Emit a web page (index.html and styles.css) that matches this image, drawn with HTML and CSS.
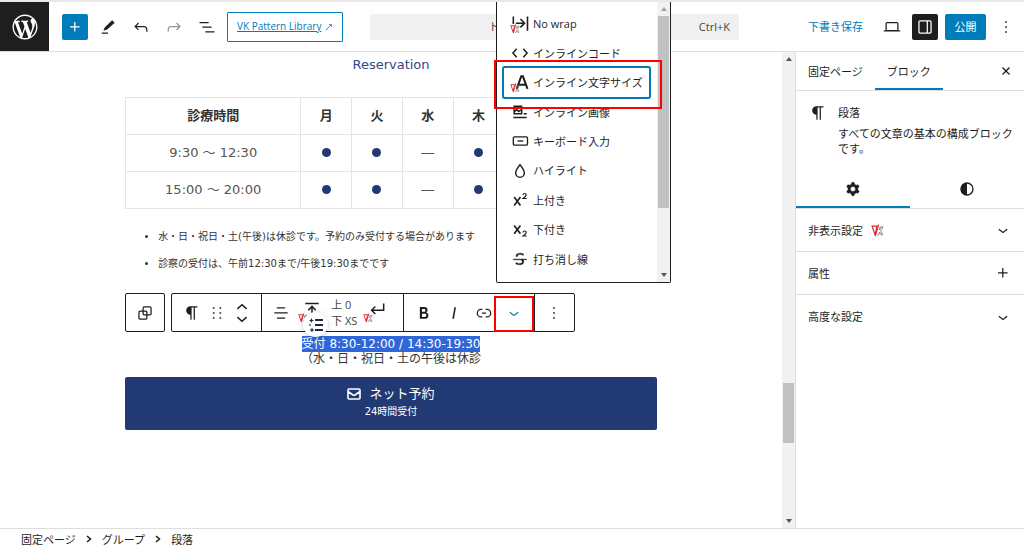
FILE: index.html
```html
<!DOCTYPE html>
<html lang="ja">
<head>
  <meta charset="UTF-8" />
  <meta name="viewport" content="width=device-width, initial-scale=1.0"/>
  <title>固定ページの編集</title>
  <link rel="stylesheet" href="styles.css">
</head>
<body>
  <!-- shared icons -->
  <svg class="sprite" aria-hidden="true">
    <symbol id="i-paragraph" viewBox="0 0 24 24"><path d="M10 14v6h1.500v-14.500h2.500v14.500h1.500v-14.500h3v-1.500h-8.500a5 5 0 0 0 0 10z"/></symbol>
    <symbol id="i-down" viewBox="0 0 24 24"><path d="M17.500 11.600L12 16l-5.500-4.400.9-1.200L12 14l4.500-3.600 1 1.200z"/></symbol>
    <symbol id="i-plus" viewBox="0 0 24 24"><path d="M11 12.500V17.500H12.500V12.500H17.500V11H12.500V6H11V11H6V12.500H11Z"/></symbol>
    <symbol id="i-more" viewBox="0 0 24 24"><path d="M13 19h-2v-2h2v2zm0-6h-2v-2h2v2zm0-6h-2V5h2v2z"/></symbol>
    <symbol id="i-vk" viewBox="0 0 24 24">
      <path d="M2 4h9L7.500 20z" fill="none" stroke="#e0202c" stroke-width="2.200"/>
      <path d="M14 1L8 22" fill="none" stroke="#e0202c" stroke-width="2.200"/>
      <path d="M22 5h-3l-3.500 6L17 5M11.500 20h3l1.500-5 2.500 5h3l-3.500-7.500L22.500 5" fill="none" stroke="#666" stroke-width="1.400"/>
    </symbol>
  </svg>

  <header class="topbar">
    <a href="#" class="wp-logo" aria-label="投稿一覧">
      <svg viewBox="-2 -2 24 24"><path d="M20 10c0-5.510-4.490-10-10-10C4.480 0 0 4.490 0 10c0 5.520 4.480 10 10 10 5.510 0 10-4.480 10-10zM7.780 15.370L4.370 6.220c.55-.02 1.170-.08 1.170-.08.5-.06.44-1.130-.06-1.110 0 0-1.450.11-2.370.11-.18 0-.37 0-.58-.01C4.120 2.690 6.870 1.110 10 1.110c2.330 0 4.450.87 6.050 2.340-.68-.11-1.650.39-1.650 1.580 0 .74.45 1.360.9 2.100.35.61.55 1.360.55 2.460 0 1.490-1.400 5-1.400 5l-3.030-8.370c.54-.02.82-.17.82-.17.5-.05.44-1.250-.06-1.220 0 0-1.440.12-2.380.12-.87 0-2.330-.12-2.330-.12-.5-.03-.56 1.200-.06 1.220l.92.08 1.260 3.410zM17.410 10c.24-.64.74-1.870.43-4.250.7 1.290 1.050 2.710 1.050 4.250 0 3.290-1.730 6.240-4.400 7.780.97-2.590 1.940-5.200 2.920-7.780zM6.100 18.090C3.120 16.650 1.110 13.530 1.110 10c0-1.300.23-2.480.72-3.590C3.250 10.300 4.670 14.200 6.100 18.090zm4.030-6.630l2.580 6.980c-.86.29-1.760.45-2.710.45-.79 0-1.570-.11-2.290-.33.81-2.380 1.620-4.740 2.420-7.100z"/></svg>
    </a>
    <button class="square-btn primary" aria-label="追加"><svg class="icon"><use href="#i-plus"/></svg></button>
    <div class="tools">
      <button aria-label="ツール"><svg class="icon" viewBox="0 0 24 24"><path d="m20 7-3-3-9 8.500-1.500 4 4.500-1.500L20 7Zm-8 11.500H4.500V20H12v-1.500Z"/></svg></button>
      <button aria-label="元に戻す"><svg class="icon" viewBox="0 0 24 24"><path d="M18.300 11.700c-.6-.6-1.400-.9-2.300-.9H6.700l2.900-3.300-1.100-1-4.500 5L8.500 16l1-1-2.700-2.700H16c.5 0 .9.2 1.300.5 1 1 1 3.400 1 4.500v.3h1.500v-.2c0-1.500 0-4.300-1.500-5.700z"/></svg></button>
      <button aria-label="やり直す" class="dim"><svg class="icon" viewBox="0 0 24 24"><path d="M15.600 6.500l-1.100 1 2.900 3.300H8c-.9 0-1.700.3-2.300.9-1.400 1.500-1.400 4.200-1.400 5.600v.2h1.500v-.3c0-1.100 0-3.500 1-4.500.3-.3.7-.5 1.300-.5h9.200L14.500 15l1.100 1.100 4.600-4.600-4.600-5z"/></svg></button>
      <button aria-label="リスト表示"><svg class="icon" viewBox="0 0 24 24"><path d="M3 6h11v1.500H3V6Zm3.500 5.500h11V13h-11v-1.500ZM21 17H10v1.500h11V17Z"/></svg></button>
    </div>
    <a href="#" class="pattern-btn"><span>VK Pattern Library</span>
      <svg viewBox="0 0 10 10"><path d="M1 9L8 2M5 2H8V5" fill="none" stroke="currentColor"/></svg>
    </a>
    <button class="command"><span>ト</span><span>Ctrl+K</span></button>
    <div class="actions">
      <a href="#" class="draft">下書き保存</a>
      <button class="square-btn" aria-label="表示"><svg class="icon" viewBox="0 0 24 24"><path d="M20.500 16h-.7V8c0-1.100-.9-2-2-2H6.200c-1.100 0-2 .9-2 2v8h-.7c-.8 0-1.500.7-1.500 1.500h20c0-.8-.7-1.500-1.500-1.500zM5.700 8c0-.3.2-.5.5-.5h11.600c.3 0 .5.2.5.5v7.600H5.700V8z"/></svg></button>
      <button class="square-btn dark" aria-label="設定"><svg class="icon" viewBox="0 0 24 24"><path d="M18 4H6c-1.100 0-2 .9-2 2v12c0 1.100.9 2 2 2h12c1.100 0 2-.9 2-2V6c0-1.100-.9-2-2-2zm-4 14.500H6c-.3 0-.5-.2-.5-.5V6c0-.3.2-.5.5-.5h8v13zm4.500-.5c0 .3-.2.5-.5.5h-2.500v-13H18c.3 0 .5.2.5.5v12z"/></svg></button>
      <button class="publish primary">公開</button>
      <button class="square-btn" aria-label="オプション"><svg class="icon"><use href="#i-more"/></svg></button>
    </div>
  </header>

  <div class="workspace">
    <main class="canvas">
      <div class="content">
        <p class="subtitle">Reservation</p>
        <table class="hours">
          <thead>
            <tr><th class="time">診療時間</th><th>月</th><th>火</th><th>水</th><th>木</th><th></th><th></th><th></th></tr>
          </thead>
          <tbody>
            <tr><td>9:30 ～ 12:30</td><td><i class="dot"></i></td><td><i class="dot"></i></td><td>―</td><td><i class="dot"></i></td><td></td><td></td><td></td></tr>
            <tr><td>15:00 ～ 20:00</td><td><i class="dot"></i></td><td><i class="dot"></i></td><td>―</td><td><i class="dot"></i></td><td></td><td></td><td></td></tr>
          </tbody>
        </table>
        <ul class="notes">
          <li>水・日・祝日・土(午後)は休診です。予約のみ受付する場合があります</li>
          <li>診察の受付は、午前12:30まで/午後19:30までです</li>
        </ul>

        <div class="toolbar">
          <div class="group parent">
            <button aria-label="親ブロックを選択"><svg class="icon" viewBox="0 0 24 24"><path d="M18 4h-7c-1.100 0-2 .9-2 2v3H6c-1.100 0-2 .9-2 2v7c0 1.100.9 2 2 2h7c1.100 0 2-.9 2-2v-3h3c1.100 0 2-.9 2-2V6c0-1.100-.9-2-2-2zm-4.500 14c0 .3-.2.5-.5.5H6c-.3 0-.5-.2-.5-.5v-7c0-.3.2-.5.5-.5h3V13c0 1.100.9 2 2 2h2.500v3zm0-4.500H11c-.3 0-.5-.2-.5-.5v-2.500H13c.3 0 .5.2.5.5v2.500zm5-.5c0 .3-.2.5-.5.5h-3V11c0-1.100-.9-2-2-2h-2.500V6c0-.3.2-.5.5-.5h7c.3 0 .5.2.5.5v7z"/></svg></button>
          </div>
          <div class="bar">
            <div class="group block-tools">
              <button aria-label="段落"><svg class="icon"><use href="#i-paragraph"/></svg></button>
              <button aria-label="ドラッグ"><svg class="icon" viewBox="0 0 24 24"><path d="M7 7h2V5H7v2zm0 6h2v-2H7v2zm0 6h2v-2H7v2zm8-14v2h2V5h-2zm0 8h2v-2h-2v2zm0 6h2v-2h-2v2z"/></svg></button>
              <button aria-label="移動"><svg class="icon" viewBox="0 0 24 24"><path d="M6.500 7L12 2l5.500 5M6.500 17l5.500 5 5.500-5" fill="none" stroke="currentColor" stroke-width="1.800"/></svg></button>
            </div>
            <div class="group spacing">
              <button aria-label="配置"><svg class="icon" viewBox="0 0 24 24"><path d="M7 5h10v1.500H7zM4 11.200h16v1.500H4zM7 17.500h10V19H7z"/></svg></button>
              <button aria-label="余白" class="vk-btn"><svg class="icon" viewBox="0 0 24 24"><path d="M4 3h16M12 18V7M7.500 11L12 6.500l4.500 4.500" fill="none" stroke="currentColor" stroke-width="1.800"/></svg><svg class="vk"><use href="#i-vk"/></svg></button>
              <div class="margins">上 0<br>下 XS</div>
              <button aria-label="改行" class="vk-btn"><svg class="icon" viewBox="0 0 24 24"><path d="M20 3v8H6M10 6.500L5.500 11l4.500 4.500" fill="none" stroke="currentColor" stroke-width="1.800"/></svg><svg class="vk"><use href="#i-vk"/></svg></button>
              <button class="helper" aria-label="候補"><svg viewBox="0 0 16 16"><path d="M7 3h8M7 8h8M7 13h8" fill="none" stroke="#1d2740" stroke-width="1.800"/><path d="M3.500 1l.7 1.700L6 3.500l-1.800.7L3.500 6l-.8-1.800L1 3.500l1.700-.8zM2 6.700l.4.900.9.400-.9.400L2 9.300l-.4-.9-.9-.4.9-.4zM4 10.500l.7 1.700 1.800.8-1.800.7L4 15.500l-.8-1.800-1.700-.7 1.700-.8z" fill="#1d2740"/></svg></button>
            </div>
            <div class="group formats">
              <button aria-label="太字"><svg class="icon" viewBox="0 0 24 24"><path d="M14.700 11.300c1-.6 1.500-1.600 1.500-3 0-2.300-1.300-3.400-4-3.400H7v14h5.800c1.400 0 2.500-.3 3.300-1 .8-.7 1.200-1.700 1.200-2.900.1-1.900-.8-3.100-2.600-3.700zm-5.100-4h2.300c.6 0 1.100.1 1.400.4.3.3.5.7.5 1.200s-.2 1-.5 1.200c-.3.3-.8.4-1.400.4H9.600V7.300zm4.600 9c-.4.3-1 .4-1.700.4H9.600v-3.900h2.900c.7 0 1.300.2 1.700.5.4.3.6.8.6 1.500s-.2 1.200-.6 1.500z"/></svg></button>
              <button aria-label="斜体"><svg class="icon" viewBox="0 0 24 24"><path d="M12.500 5L10 19h1.900l2.500-14z"/></svg></button>
              <button aria-label="リンク"><svg class="icon" viewBox="0 0 24 24"><path d="M10 17.400H8.400A5.200 5.200 0 1 1 8.400 7H10v1.500H8.400a3.700 3.700 0 0 0 0 7.400H10v1.500ZM14 7h1.600a5.200 5.200 0 0 1 0 10.400H14v-1.500h1.600a3.700 3.700 0 0 0 0-7.400H14V7Zm-4.500 6h5v-1.500h-5V13Z"/></svg></button>
              <button aria-label="さらに表示" class="more-formats"><svg class="icon"><use href="#i-down"/></svg><span class="mark"></span></button>
            </div>
            <div class="group options">
              <button aria-label="オプション"><svg class="icon"><use href="#i-more"/></svg></button>
            </div>
          </div>
        </div>

        <p class="reception"><mark>受付 8:30-12:00 / 14:30-19:30</mark><br>（水・日・祝日・土の午後は休診</p>

        <a href="#" class="reserve">
          <span class="reserve-main">
            <svg viewBox="0 0 14 12"><path d="M2 1h10a1 1 0 0 1 1 1v8a1 1 0 0 1-1 1H2a1 1 0 0 1-1-1V2a1 1 0 0 1 1-1zM1 3.500l5 3.500q1 .6 2 0l5-3.500" fill="none" stroke="currentColor" stroke-width="1.600"/></svg>
            ネット予約
          </span>
          <span class="reserve-sub">24時間受付</span>
        </a>
      </div>
    </main>

    <div class="scrollbar page-scroll">
      <i class="arrow up"></i><i class="track-before"></i><i class="thumb"></i><i class="track-after"></i><i class="arrow down"></i>
    </div>

    <aside class="sidebar">
      <div class="tabs">
        <button>固定ページ</button>
        <button class="active">ブロック</button>
        <button class="close" aria-label="閉じる"><svg class="icon" viewBox="0 0 24 24"><path d="M12 13.100l3.700 3.700 1.100-1.100L13.100 12l3.700-3.700-1.100-1.100L12 10.900 8.300 7.200 7.200 8.300l3.700 3.700-3.700 3.700 1.100 1.100z"/></svg></button>
      </div>
      <div class="card">
        <svg class="icon"><use href="#i-paragraph"/></svg>
        <div>
          <h2>段落</h2>
          <p>すべての文章の基本の構成ブロックです。</p>
        </div>
      </div>
      <div class="subtabs">
        <button class="active" aria-label="設定"><svg class="icon" viewBox="0 0 24 24"><path fill-rule="evenodd" d="M10.300 4.800A1 1 0 0111.300 4h1.300a1 1 0 011 .8l.2 1.500c.8.3 1.500.7 2.100 1.200l1.400-.5a1 1 0 011.200.4l.7 1.200a1 1 0 01-.3 1.200l-1.100 1a6 6 0 010 2.400l1.100.9a1 1 0 01.3 1.300l-.7 1.100a1 1 0 01-1.200.5l-1.400-.6c-.6.6-1.300 1-2.100 1.300l-.2 1.400a1 1 0 01-1 .9h-1.300a1 1 0 01-1-.9l-.3-1.400a6 6 0 01-2.100-1.300l-1.400.6a1 1 0 01-1.200-.5l-.6-1.100a1 1 0 01.2-1.300l1.200-.9a6 6 0 010-2.400l-1.200-1a1 1 0 01-.2-1.200l.6-1.200a1 1 0 011.200-.4l1.400.5a6 6 0 012.100-1.200zM14.900 12a3 3 0 11-6 0 3 3 0 016 0z" stroke="currentColor" stroke-width=".5"/></svg></button>
        <button aria-label="スタイル"><svg class="icon" viewBox="0 0 24 24"><circle cx="12" cy="12" r="7.200" fill="none" stroke="currentColor" stroke-width="1.600"/><path d="M12 4.500a7.500 7.500 0 0 0 0 15z"/></svg></button>
      </div>
      <button class="panel"><span>非表示設定</span><svg class="vk"><use href="#i-vk"/></svg><svg class="icon"><use href="#i-down"/></svg></button>
      <button class="panel"><span>属性</span><svg class="icon"><use href="#i-plus"/></svg></button>
      <button class="panel"><span>高度な設定</span><svg class="icon"><use href="#i-down"/></svg></button>
    </aside>
  </div>

  <footer class="breadcrumb">
    <a href="#">固定ページ</a>
    <svg viewBox="0 0 6 8"><path d="M1 1l3.500 3L1 7" fill="none" stroke="currentColor" stroke-width="1.500"/></svg>
    <a href="#">グループ</a>
    <svg viewBox="0 0 6 8"><path d="M1 1l3.500 3L1 7" fill="none" stroke="currentColor" stroke-width="1.500"/></svg>
    <span>段落</span>
  </footer>

  <!-- format drop-down, opened over the page -->
  <div class="menu">
    <div class="menu-list">
      <button><span class="menu-icon"><svg class="icon" viewBox="0 0 24 24"><path d="M4 3v9M21 3v17M7 11h10M12.500 6l5 5-5 5" fill="none" stroke="currentColor" stroke-width="1.900"/></svg><svg class="vk"><use href="#i-vk"/></svg></span>No wrap</button>
      <button><span class="menu-icon"><svg class="icon" viewBox="0 0 24 24"><path d="M8 7L3.500 12l4.500 5M16 7l4.500 5-4.500 5" fill="none" stroke="currentColor" stroke-width="1.800"/></svg></span>インラインコード</button>
      <button class="selected"><span class="menu-icon"><svg class="icon" viewBox="0 0 24 24"><path d="M8 19L13.500 4h2L21 19M10 14h9" fill="none" stroke="currentColor" stroke-width="2.400"/></svg><svg class="vk"><use href="#i-vk"/></svg></span>インライン文字サイズ</button>
      <button><span class="menu-icon"><svg class="icon" viewBox="0 0 24 24"><path d="M5 5h9v9H5zM4 18.500h16M16.500 14H20M5 12l3-3 2.500 2.500L14 9" fill="none" stroke="currentColor" stroke-width="1.800"/></svg></span>インライン画像</button>
      <button><span class="menu-icon"><svg class="icon" viewBox="0 0 24 24"><rect x="4" y="7" width="17" height="10" rx="1.500" fill="none" stroke="currentColor" stroke-width="1.600"/><path d="M9 11.200h7v1.600H9z"/></svg></span>キーボード入力</button>
      <button><span class="menu-icon"><svg class="icon" viewBox="0 0 24 24"><path d="M12 4.500q-5.200 6.500-5.200 9.800a5.200 5.200 0 0 0 10.400 0q0-3.300-5.200-9.800z" fill="none" stroke="currentColor" stroke-width="1.700"/></svg></span>ハイライト</button>
      <button><span class="menu-icon"><svg class="icon" viewBox="0 0 24 24"><path d="M5 8.500l7.500 10M12.500 8.500L5 18.500" fill="none" stroke="currentColor" stroke-width="2"/><path d="M15.500 6q.3-1.800 2-1.800 1.900 0 1.900 1.700 0 1.300-3.700 4.300H20" fill="none" stroke="currentColor" stroke-width="1.400"/></svg></span>上付き</button>
      <button><span class="menu-icon"><svg class="icon" viewBox="0 0 24 24"><path d="M5 6.500l7.500 10M12.500 6.500L5 16.500" fill="none" stroke="currentColor" stroke-width="2"/><path d="M15.500 15q.3-1.800 2-1.800 1.900 0 1.900 1.700 0 1.300-3.700 4.300H20" fill="none" stroke="currentColor" stroke-width="1.400"/></svg></span>下付き</button>
      <button><span class="menu-icon"><svg class="icon" viewBox="0 0 24 24"><path d="M9.100 9v-.5c0-.6.2-1.100.7-1.400.5-.3 1.200-.5 2-.5.7 0 1.400.1 2.100.3.7.2 1.400.5 2.100.9l.2-1.900c-.6-.3-1.200-.5-1.900-.7-.8-.1-1.600-.2-2.400-.2-1.500 0-2.700.3-3.600 1-.8.7-1.200 1.500-1.200 2.600V9h2zM20 12H4v1h8.300c.3.1.6.2.8.3.5.2.9.5 1.100.8.3.3.4.7.4 1.200 0 .7-.2 1.100-.8 1.500-.5.3-1.200.5-2.100.5-.8 0-1.600-.1-2.400-.3-.8-.2-1.500-.5-2.200-.8L7 18.100c.5.2 1.200.4 2 .6.8.2 1.600.3 2.400.3 1.700 0 3-.3 3.900-1 .9-.7 1.300-1.600 1.300-2.800 0-.9-.2-1.700-.7-2.200H20v-1z" stroke="currentColor" stroke-width=".4"/></svg></span>打ち消し線</button>
    </div>
    <div class="scrollbar menu-scroll">
      <i class="arrow up"></i><i class="thumb"></i><i class="track-after"></i><i class="arrow down"></i>
    </div>
    <span class="mark"></span>
  </div>
</body>
</html>
```

FILE: styles.css
```css
* {
  box-sizing: border-box;
}

body {
  margin: 0;
  height: 100vh;
  overflow: hidden;
  display: flex;
  flex-direction: column;
  position: relative;
  background: #fff;
  color: #1e1e1e;
  font-family: "Open Sans", "Noto Sans CJK JP", sans-serif;
  font-size: 11px;
  line-height: 15px;
  border-top: 2px solid #e8e8e8;
}

button {
  display: flex;
  align-items: center;
  justify-content: center;
  margin: 0;
  padding: 0;
  border: none;
  background: none;
  color: inherit;
  font: inherit;
  cursor: pointer;
}

a {
  color: inherit;
  text-decoration: none;
}

h2,
p {
  margin: 0;
}

svg {
  flex: none;
  fill: currentColor;
}

.sprite {
  display: none;
}

.icon {
  width: 20px;
  height: 20px;
}

.vk {
  width: 10px;
  height: 10px;
}

/* top bar */
.topbar {
  flex: none;
  display: flex;
  align-items: center;
  height: 50px;
  border-bottom: 1px solid #ddd;
}

.wp-logo {
  display: flex;
  align-items: center;
  justify-content: center;
  width: 49px;
  height: 49px;
  margin-right: 13px;
  background: #1e1e1e;
  color: #fff;
}

.wp-logo svg {
  width: 30px;
  height: 30px;
}

.square-btn {
  width: 26px;
  height: 26px;
  border-radius: 2px;
}

.primary {
  background: #007cba;
  color: #fff;
}

.dark {
  background: #1e1e1e;
  color: #fff;
}

.tools {
  display: flex;
  margin: 0 4px 0 3px;
}

.tools button {
  width: 33px;
  height: 26px;
}

.dim {
  color: #949494;
}

.pattern-btn {
  display: flex;
  align-items: center;
  gap: 4px;
  height: 30px;
  padding: 0 9px;
  border: 1px solid #007cba;
  border-radius: 1px;
  color: #007cba;
  font-size: 10px;
  white-space: nowrap;
}

.pattern-btn span {
  text-decoration: underline;
}

.pattern-btn svg {
  width: 8px;
  height: 8px;
}

.command {
  flex: 1;
  justify-content: space-between;
  height: 26px;
  margin: 0 69px 0 27px;
  padding: 0 9px 0 118px;
  border-radius: 3px;
  background: #f0f0f0;
  color: #444;
}

.actions {
  display: flex;
  align-items: center;
  gap: 7px;
  padding-right: 5px;
}

.draft {
  margin-right: 9px;
  color: #007cba;
}

.publish {
  width: 41px;
  height: 26px;
  border-radius: 2px;
}

/* editor */
.workspace {
  flex: 1;
  min-height: 0;
  display: flex;
}

.canvas {
  flex: 1;
  display: flex;
  justify-content: center;
  overflow: hidden;
}

.content {
  width: 68%;
  color: #333;
  font-family: "DejaVu Sans", "Noto Sans CJK JP", sans-serif;
}

.subtitle {
  padding: 5px 0 24px;
  color: #2f4a87;
  font-size: 13px;
  line-height: 16px;
  text-align: center;
}

.hours {
  width: 100%;
  table-layout: fixed;
  border-collapse: collapse;
  color: #555;
  font-size: 13px;
  text-align: center;
}

.hours th,
.hours td {
  height: 37px;
  padding: 0 0 2px;
  border: 1px solid #e5e5e5;
}

.hours th {
  color: #333;
}

.hours .time {
  width: 33%;
}

.dot {
  display: block;
  width: 9px;
  height: 9px;
  margin: 0 auto;
  border-radius: 50%;
  background: #223a74;
}

.notes {
  margin: 14px 0 16px;
  padding-left: 33px;
  font-size: 10px;
  line-height: 27px;
}

.toolbar {
  display: flex;
  gap: 6px;
  color: #1e1e1e;
  font-family: "Open Sans", "Noto Sans CJK JP", sans-serif;
}

.bar {
  display: flex;
  border: 1px solid #1e1e1e;
  border-radius: 2px;
}

.group {
  display: flex;
  align-items: center;
  height: 37px;
}

.group + .group {
  border-left: 1px solid #1e1e1e;
}

.group button {
  width: 30px;
  height: 36px;
}

.parent {
  height: 39px;
  padding: 0 4px;
  border: 1px solid #1e1e1e;
  border-radius: 2px;
}

.block-tools {
  padding: 0 7px;
}

.group.block-tools button {
  width: 25px;
}

.spacing {
  position: relative;
  padding: 0 10px 0 4px;
}

.group .vk-btn {
  width: 32px;
}

.vk-btn,
.menu-icon {
  position: relative;
}

.vk-btn .icon {
  margin-bottom: 4px;
}

.vk-btn .vk,
.menu-icon .vk {
  position: absolute;
  left: 2px;
  bottom: 8px;
}

.margins {
  width: 33px;
  padding-left: 3px;
  color: #444;
  line-height: 16px;
  white-space: nowrap;
}

.group .helper {
  position: absolute;
  left: 41px;
  top: 18px;
  width: 25px;
  height: 25px;
  border-radius: 50%;
  background: #fff;
  box-shadow: 0 1px 5px rgba(0, 0, 0, .2);
}

.helper svg {
  width: 16px;
  height: 16px;
}

.formats {
  padding: 0 5px;
}

.options {
  padding: 0 5px 0 4px;
}

.more-formats {
  position: relative;
  color: #007cba;
}

.mark {
  position: absolute;
  border: 2px solid #f00;
  pointer-events: none;
}

.more-formats .mark {
  inset: 1px -5px -1px -5px;
}

.reception {
  padding: 5px 0 10px;
  font-size: 12px;
  line-height: 15px;
  text-align: center;
}

.reception mark {
  padding: 1px 0;
  background: #2f67d8;
  color: #fff;
}

.reserve {
  display: flex;
  flex-direction: column;
  align-items: center;
  padding: 8px 0 9px;
  border-radius: 2px;
  background: #223a74;
  color: #fff;
  line-height: 18px;
}

.reserve-main {
  display: flex;
  align-items: center;
  gap: 8px;
  font-size: 13px;
}

.reserve-main svg {
  width: 14px;
  height: 12px;
}

.reserve-sub {
  font-size: 10px;
}

/* scroll bars */
.scrollbar {
  flex: none;
  display: flex;
  flex-direction: column;
  align-items: stretch;
  width: 13px;
  background: #f1f1f1;
}

.thumb {
  margin: 0 1px;
  background: #c1c1c1;
}

.arrow {
  flex: none;
  align-self: center;
  margin: 5px 0;
  border: 3px solid transparent;
}

.arrow.up {
  border-top: none;
  border-bottom: 4px solid #555;
}

.arrow.down {
  border-bottom: none;
  border-top: 4px solid #555;
}

.menu-scroll .arrow.up {
  border-bottom-color: #a3a3a3;
}

.page-scroll .track-before {
  flex: 318;
}

.page-scroll .thumb {
  flex: 60;
}

.page-scroll .track-after {
  flex: 71;
}

/* settings */
.sidebar {
  flex: none;
  width: 229px;
  border-left: 1px solid #ddd;
}

.tabs {
  display: flex;
  height: 39px;
  border-bottom: 1px solid #ddd;
}

.tabs button {
  padding: 0 12px;
}

.tabs .active,
.subtabs .active {
  box-shadow: inset 0 -2px #007cba;
}

.tabs .close {
  margin-left: auto;
  padding: 0 8px;
}

.card {
  display: flex;
  align-items: flex-start;
  gap: 10px;
  padding: 14px 8px 14px 12px;
}

.card .icon {
  margin-top: -2px;
}

.card h2 {
  margin-bottom: 6px;
  font-size: 11px;
  font-weight: 400;
}

.subtabs {
  display: flex;
  height: 39px;
  border-bottom: 1px solid #ddd;
}

.subtabs button {
  flex: 1;
}

.panel {
  justify-content: flex-start;
  width: 100%;
  height: 43px;
  padding: 0 11px 0 12px;
  border-bottom: 1px solid #ddd;
}

.panel:last-child {
  border-bottom: none;
}

.panel .vk {
  width: 13px;
  height: 13px;
  margin-left: 8px;
}

.panel .icon {
  margin-left: auto;
}

/* footer */
.breadcrumb {
  flex: none;
  display: flex;
  align-items: center;
  gap: 10px;
  height: 19px;
  padding: 2px 21px 0;
  border-top: 1px solid #ddd;
}

.breadcrumb svg {
  width: 6px;
  height: 8px;
}

/* format menu */
.menu {
  position: absolute;
  left: 496px;
  top: 0;
  display: flex;
  width: 175px;
  height: 281px;
  border: 1px solid #1e1e1e;
  border-top: none;
  border-radius: 0 0 2px 2px;
  background: #fff;
}

.menu-list {
  flex: 1;
  display: grid;
  grid-auto-rows: 1fr;
  padding: 7px 8px 8px 7px;
}

.menu-list button {
  justify-content: flex-start;
  gap: 3px;
  padding-left: 6px;
  border-radius: 1px;
  white-space: nowrap;
}

.menu-list .selected {
  box-shadow: 0 0 0 2px #007cba;
}

.menu-icon {
  display: flex;
}

.menu-icon .vk {
  left: 0;
  bottom: 0;
}

.menu-scroll .thumb {
  flex: 192;
}

.menu-scroll .track-after {
  flex: 60;
}

.menu > .mark {
  inset: 58px 8px 173px -3px;
}
```
